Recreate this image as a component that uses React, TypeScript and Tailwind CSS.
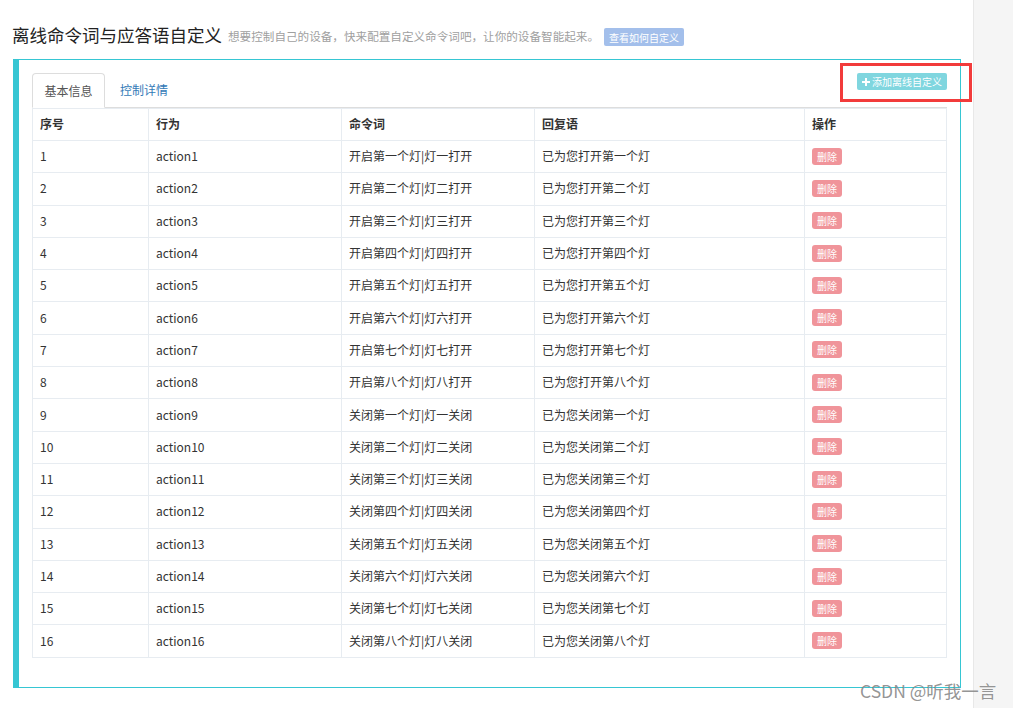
import React from "react"

const rows = [
  ["开启第一个灯|灯一打开", "已为您打开第一个灯"],
  ["开启第二个灯|灯二打开", "已为您打开第二个灯"],
  ["开启第三个灯|灯三打开", "已为您打开第三个灯"],
  ["开启第四个灯|灯四打开", "已为您打开第四个灯"],
  ["开启第五个灯|灯五打开", "已为您打开第五个灯"],
  ["开启第六个灯|灯六打开", "已为您打开第六个灯"],
  ["开启第七个灯|灯七打开", "已为您打开第七个灯"],
  ["开启第八个灯|灯八打开", "已为您打开第八个灯"],
  ["关闭第一个灯|灯一关闭", "已为您关闭第一个灯"],
  ["关闭第二个灯|灯二关闭", "已为您关闭第二个灯"],
  ["关闭第三个灯|灯三关闭", "已为您关闭第三个灯"],
  ["关闭第四个灯|灯四关闭", "已为您关闭第四个灯"],
  ["关闭第五个灯|灯五关闭", "已为您关闭第五个灯"],
  ["关闭第六个灯|灯六关闭", "已为您关闭第六个灯"],
  ["关闭第七个灯|灯七关闭", "已为您关闭第七个灯"],
  ["关闭第八个灯|灯八关闭", "已为您关闭第八个灯"],
]

const font = { fontFamily: '"Noto Sans CJK SC", "Open Sans", sans-serif' }

export default function App() {
  return (
    <div className="relative flex h-[708px] w-[1013px] overflow-hidden bg-white text-[#333]" style={font}>
      {/* main content */}
      <div className="w-[973px] pl-[12px] pt-[22px]">
        <div className="flex h-[26px] items-center">
          <h1 className="text-[17.5px] font-normal leading-none text-[#222]">离线命令词与应答语自定义</h1>
          <span className="ml-[6px] mt-[4px] text-[11.6px] text-[#a0a0a0]">想要控制自己的设备，快来配置自定义命令词吧，让你的设备智能起来。</span>
          <span className="ml-[5px] mt-[4px] flex h-[18px] w-[80px] items-center justify-center rounded-[2px] bg-[#a3bfeb] text-[10px] text-white">查看如何自定义</span>
        </div>

        <div className="ml-[1px] mt-[11px] w-[948px] border border-l-[6px] border-[#36c6d3] px-[13px] pb-[29px] pt-[13px]">
          {/* tabs */}
          <div className="flex h-[35px] items-start border-b border-[#ddd]">
            <div className="flex h-[35px] w-[73px] items-center justify-center rounded-t-[4px] border border-b-white border-[#ddd] bg-white text-[12px] text-[#555]">
              基本信息
            </div>
            <div className="ml-[3px] flex h-[34px] items-center px-[12px] text-[12px] text-[#337ab7]">控制详情</div>
            <div className="ml-auto flex h-[17px] w-[90px] items-center justify-center gap-[2px] rounded-[2px] bg-[#80d6df] text-[10px] text-white">
              <svg width="8" height="8" viewBox="0 0 8 8"><path d="M3 0h2v3h3v2H5v3H3V5H0V3h3z" fill="white" /></svg>
              添加离线自定义
            </div>
          </div>

          {/* table */}
          <table className="w-[914px] table-fixed border-collapse text-[12px]">
            <colgroup>
              <col className="w-[116px]" />
              <col className="w-[193px]" />
              <col className="w-[193px]" />
              <col className="w-[270px]" />
              <col className="w-[142px]" />
            </colgroup>
            <thead>
              <tr className="h-[32px]">
                {["序号", "行为", "命令词", "回复语", "操作"].map((h) => (
                  <th key={h} className="border border-[#e7ecf1] px-[7px] pb-[1px] text-left font-bold text-[#333]">{h}</th>
                ))}
              </tr>
            </thead>
            <tbody>
              {rows.map(([cmd, reply], i) => (
                <tr key={i} className="h-[32.3px]">
                  <td className="border border-[#e7ecf1] px-[7px] pb-[1px]">{i + 1}</td>
                  <td className="border border-[#e7ecf1] px-[7px] pb-[1px]">action{i + 1}</td>
                  <td className="border border-[#e7ecf1] px-[7px] pb-[1px]">{cmd}</td>
                  <td className="border border-[#e7ecf1] px-[7px] pb-[1px]">{reply}</td>
                  <td className="border border-[#e7ecf1] px-[7px] pb-[1px]">
                    <span className="flex h-[17px] w-[30px] items-center justify-center rounded-[3px] bg-[#f0949a] text-[10px] text-white">删除</span>
                  </td>
                </tr>
              ))}
            </tbody>
          </table>
        </div>
      </div>

      {/* right strip */}
      <div className="flex-1 border-l border-[#e8e8e8] bg-[#f5f5f5]" />

      {/* annotation box */}
      <div className="absolute left-[840px] top-[63px] h-[39px] w-[132px] border-[3px] border-[#f23b3b]" />

      {/* watermark */}
      <div className="absolute left-[860px] top-[678px] text-[17.5px] text-[#888]/90">CSDN @听我一言</div>
    </div>
  )
}
